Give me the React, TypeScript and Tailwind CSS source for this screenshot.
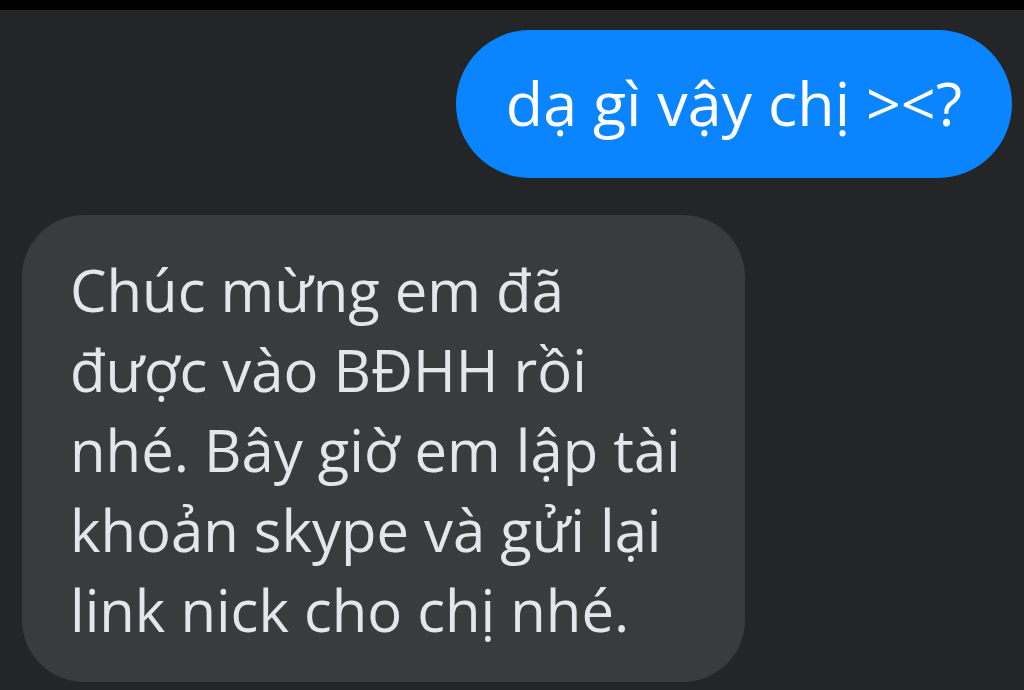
export default function App() {
  const font = { fontFamily: '"Open Sans", "Noto Sans", sans-serif' };
  return (
    <div className="w-[1024px] h-[690px] bg-[#242526] flex flex-col overflow-hidden" style={font}>
      <div className="h-[10px] bg-black shrink-0" />
      <div className="flex flex-col px-[12px] pt-[20px]">
        <div className="flex justify-end">
          <div className="h-[148px] rounded-full bg-[#0a84ff] text-white text-[61px] leading-[80px] flex items-center pl-[50px] pr-[50px] pb-[2px]">
            dạ gì vậy chị &gt;&lt;?
          </div>
        </div>
        <div className="flex justify-start mt-[37px] pl-[10px]">
          <div className="rounded-[62px] bg-[#3a3b3c] text-[#e4e6eb] text-[58px] leading-[80px] pl-[48px] pr-[64px] pt-[35px] pb-[32px]">
            Chúc mừng em đã<br />
            được vào BĐHH rồi<br />
            nhé. Bây giờ em lập tài<br />
            khoản skype và gửi lại<br />
            link nick cho chị nhé.
          </div>
        </div>
      </div>
    </div>
  );
}
